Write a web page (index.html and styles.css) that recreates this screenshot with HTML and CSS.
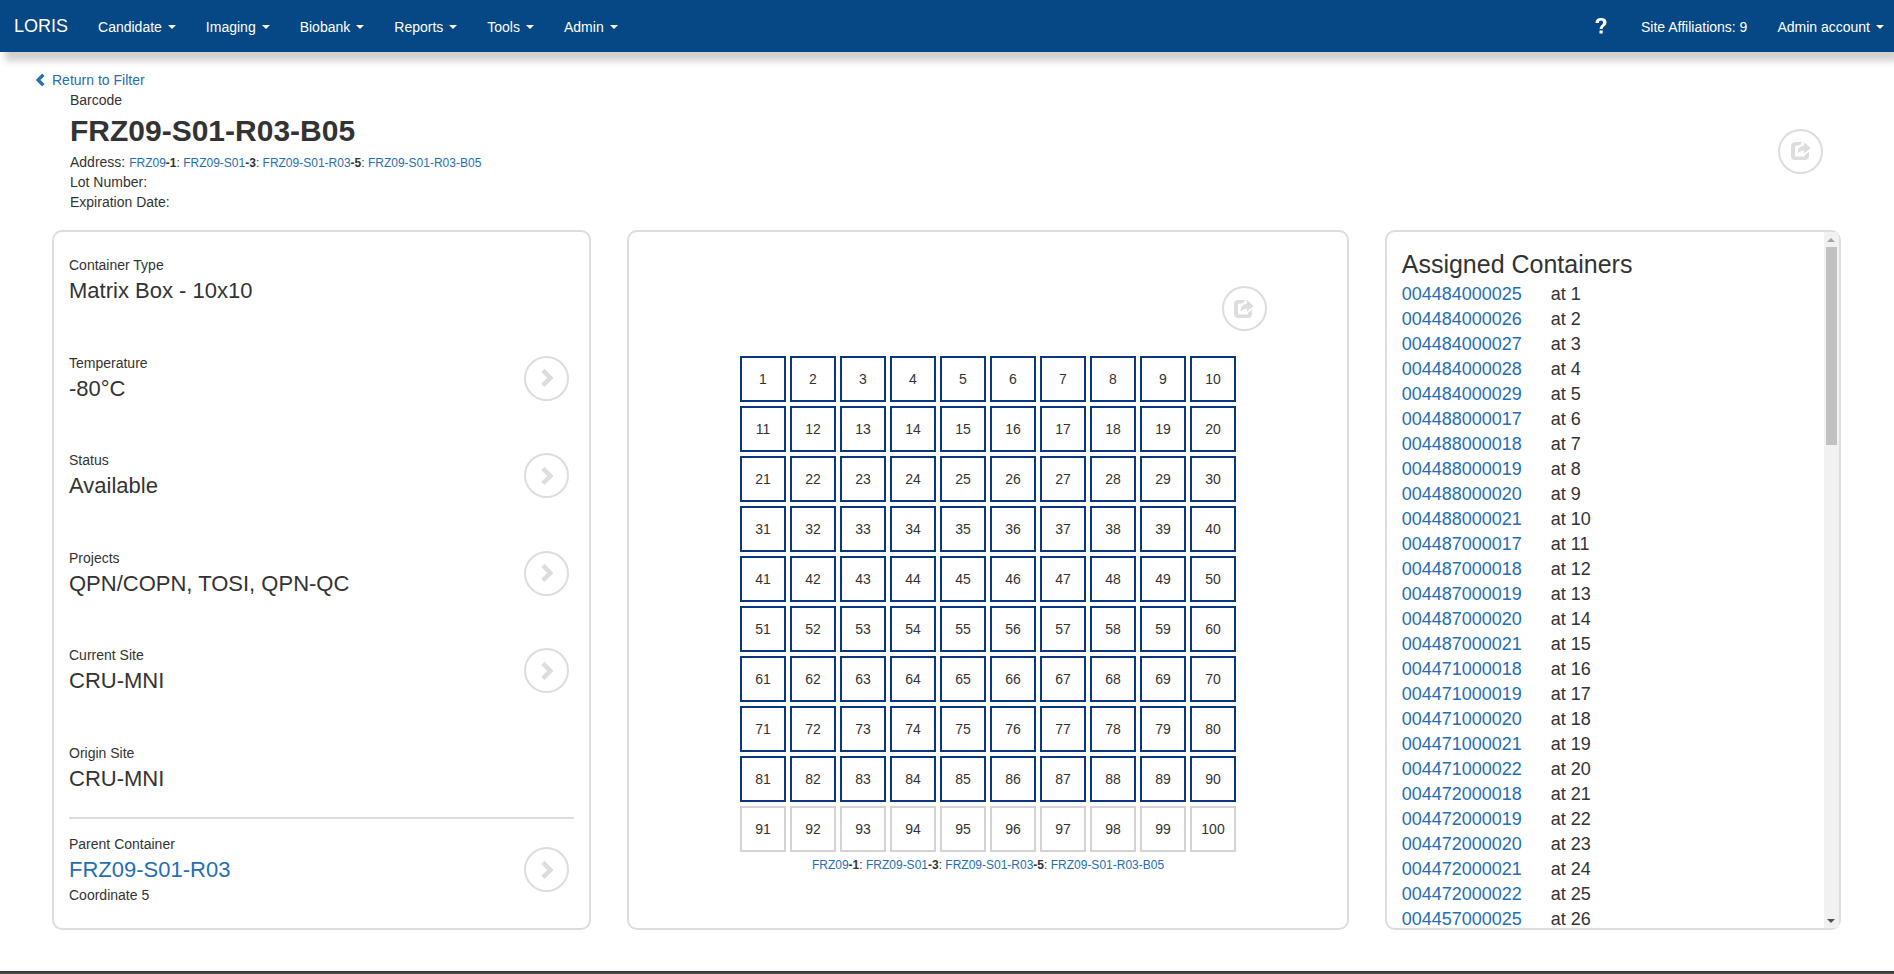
FILE: index.html
```html
<!DOCTYPE html>
<html lang="en">
<head>
<meta charset="utf-8">
<title>LORIS - FRZ09-S01-R03-B05</title>
<link rel="stylesheet" href="styles.css">
</head>
<body>
<svg class="sprite" aria-hidden="true">
  <symbol id="share" viewBox="0 0 20 20"><path d="M11.500 1L8.500 4.600H5.400Q4 4.600 4 6V14Q4 15.400 5.400 15.400H12.600Q14.400 15.400 14.400 14V13.500L18 10.500V14.500Q18 19 13.500 19H4.500Q0 19 0 14.500V5.500Q0 1 4.500 1Z"/><path d="M13 1L19.600 7L13 12.600V9.400Q9.500 9.200 6.500 12.400Q6.700 5.200 13 4.500Z"/></symbol>
  <symbol id="chev-right" viewBox="0 0 20 20"><path d="M4.300 4L7.500 .8L16.500 9.900L7.500 19L4.300 15.800L10.200 9.900Z"/></symbol>
  <symbol id="chev-left" viewBox="0 0 14 14"><path d="M8.200 .6L10.500 2.900L6.400 7L10.500 11.100L8.200 13.400L1.800 7Z"/></symbol>
  <symbol id="help" viewBox="0 0 14 18"><path d="M1.500 6Q1.600 1 7 1Q12.500 1 12.500 5.400Q12.500 7.400 10.500 8.900Q8.600 10.200 8.600 12H5.600Q5.500 9.600 7.700 7.900Q9.100 6.800 9.100 5.500Q9.100 3.600 7.100 3.600Q4.900 3.600 4.700 6ZM5.500 13.400H8.700V16.400H5.500Z"/></symbol>
</svg>

<nav class="navbar">
  <a class="brand" href="#">LORIS</a>
  <a class="nav-item" href="#">Candidate <span class="caret"></span></a>
  <a class="nav-item" href="#">Imaging <span class="caret"></span></a>
  <a class="nav-item" href="#">Biobank <span class="caret"></span></a>
  <a class="nav-item" href="#">Reports <span class="caret"></span></a>
  <a class="nav-item" href="#">Tools <span class="caret"></span></a>
  <a class="nav-item" href="#">Admin <span class="caret"></span></a>
  <div class="nav-right">
    <a class="nav-item help" href="#" aria-label="Help"><svg><use href="#help"/></svg></a>
    <a class="nav-item" href="#">Site Affiliations: 9</a>
    <a class="nav-item" href="#">Admin account <span class="caret"></span></a>
  </div>
</nav>

<main class="page">
  <a class="return" href="#"><svg><use href="#chev-left"/></svg>Return to Filter</a>
  <header class="header">
    <div>
      <div>Barcode</div>
      <h1>FRZ09-S01-R03-B05</h1>
      <div>Address: <span class="address"><a href="#">FRZ09</a><b>-1</b>: <a href="#">FRZ09-S01</a><b>-3</b>: <a href="#">FRZ09-S01-R03</a><b>-5</b>: <a href="#">FRZ09-S01-R03-B05</a></span></div>
      <div>Lot Number:</div>
      <div>Expiration Date:</div>
    </div>
    <button class="round" type="button" aria-label="Check out"><svg><use href="#share"/></svg></button>
  </header>

  <div class="columns">
    <section class="panel globals">
      <div class="items">
        <div class="item"><div><div>Container Type</div><div class="value">Matrix Box - 10x10</div></div></div>
        <div class="item"><div><div>Temperature</div><div class="value">-80°C</div></div><button class="round" type="button" aria-label="Edit temperature"><svg><use href="#chev-right"/></svg></button></div>
        <div class="item"><div><div>Status</div><div class="value">Available</div></div><button class="round" type="button" aria-label="Edit status"><svg><use href="#chev-right"/></svg></button></div>
        <div class="item"><div><div>Projects</div><div class="value">QPN/COPN, TOSI, QPN-QC</div></div><button class="round" type="button" aria-label="Edit projects"><svg><use href="#chev-right"/></svg></button></div>
        <div class="item"><div><div>Current Site</div><div class="value">CRU-MNI</div></div><button class="round" type="button" aria-label="Edit current site"><svg><use href="#chev-right"/></svg></button></div>
        <div class="item"><div><div>Origin Site</div><div class="value">CRU-MNI</div></div></div>
      </div>
      <div class="item parent"><div><div>Parent Container</div><div class="value"><a href="#">FRZ09-S01-R03</a></div><div>Coordinate 5</div></div><button class="round" type="button" aria-label="Edit parent container"><svg><use href="#chev-right"/></svg></button></div>
    </section>

    <section class="panel display">
      <div class="display-actions"><button class="round" type="button" aria-label="Load container"><svg><use href="#share"/></svg></button></div>
      <div class="matrix" id="matrix"></div>
      <div class="address"><a href="#">FRZ09</a><b>-1</b>: <a href="#">FRZ09-S01</a><b>-3</b>: <a href="#">FRZ09-S01-R03</a><b>-5</b>: <a href="#">FRZ09-S01-R03-B05</a></div>
    </section>

    <section class="panel list">
      <div class="list-body">
        <h2>Assigned Containers</h2>
        <div class="assigned" id="assigned"></div>
      </div>
      <div class="scrollbar" aria-hidden="true">
        <span class="arrow up"></span>
        <span class="thumb"></span>
        <span class="arrow down"></span>
      </div>
    </section>
  </div>
</main>
<footer class="footer"></footer>
<script src="app.js"></script>
</body>
</html>
```
FILE: styles.css
```css
* { box-sizing: border-box; }
body {
  margin: 0;
  min-height: 100vh;
  display: flex;
  flex-direction: column;
  font: 14px/20px "Liberation Sans", Arial, sans-serif;
  color: #333;
  background: #fff;
}
a { color: #246eb6; text-decoration: none; }
svg { fill: currentColor; display: block; }
.sprite { position: absolute; width: 0; height: 0; }

.navbar {
  display: flex;
  align-items: center;
  height: 52px;
  padding-top: 2px;
  background: #064785;
  box-shadow: 5px 9px 7px #d0d0d0;
}
.navbar a { color: #fff; }
.brand { font-size: 18px; padding: 0 15px 2px 14px; }
.nav-item { display: flex; align-items: center; gap: 6px; padding: 0 15px; }
.caret { border: 4px solid transparent; border-top-color: #fff; border-bottom: 0; }
.nav-right { display: flex; align-items: center; margin-left: auto; }
.nav-right .nav-item:last-child { padding-right: 10px; }
.nav-right .help { padding: 0 18px 2px 15px; }
.help svg { width: 14px; height: 18px; }

.page { padding: 18px 53px 41px 34px; }
.return { display: flex; align-items: center; gap: 4px; width: max-content; }
.return svg { width: 14px; height: 14px; }
.header {
  display: flex;
  align-items: center;
  justify-content: space-between;
  padding: 0 18px 0 36px;
  margin-bottom: 18px;
}
h1 { margin: 1px 0; font-size: 30px; line-height: 40px; }
.address { font-size: 12px; }
.header .address { line-height: 1; }

.round {
  width: 45px;
  height: 45px;
  flex: none;
  display: grid;
  place-items: center;
  padding: 0;
  border: 2px solid #ddd;
  border-radius: 50%;
  background: #fff;
  color: #ddd;
}
.round svg { width: 20px; height: 20px; }

.columns {
  display: grid;
  grid-template-columns: 539fr 721fr 456fr;
  gap: 36px;
  padding-left: 18px;
}
.panel {
  height: 700px;
  border: 2px solid #ddd;
  border-radius: 10px;
}
.globals { padding: 23px 15px; display: flex; flex-direction: column; }
.items { flex: 1; display: flex; flex-direction: column; justify-content: space-between; }
.item { display: flex; justify-content: space-between; align-items: center; padding-right: 5px; }
.value { font-size: 22px; line-height: 31px; }
.parent { margin-top: 23px; padding-top: 15px; border-top: 2px solid #ddd; }

.display { display: flex; flex-direction: column; align-items: center; padding-top: 54px; }
.display-actions { width: 100%; display: flex; justify-content: flex-end; padding-right: 80px; margin-bottom: 25px; }
.matrix { display: grid; grid-template-columns: repeat(10, 46px); gap: 4px; margin-bottom: 3px; }
.cell { height: 46px; border: 2px solid #d3d3d3; display: grid; place-items: center; }
.cell.filled { border-color: #093782; }

.list { display: flex; }
.list-body { flex: 1; padding: 14px 15px 0; overflow: hidden; }
h2 { margin: 0; font-size: 25px; line-height: 36px; font-weight: 400; }
.assigned { display: grid; grid-template-columns: 149px 1fr; font-size: 18px; line-height: 25px; }
.scrollbar { width: 15px; display: flex; flex-direction: column; align-items: center; background: #f1f1f1; }
.arrow { height: 15px; display: grid; place-items: center; }
.arrow::before { content: ""; border: 4px solid transparent; }
.up::before { border-bottom-color: #a3a3a3; border-top: 0; }
.down { margin-top: auto; }
.down::before { border-top-color: #505050; border-bottom: 0; }
.thumb { width: 11px; height: 198px; background: #c1c1c1; }

.footer { flex: 1; background: #48483f; border-top: 1px solid #33332c; }
```
FILE: app.js
```js
const matrix = document.getElementById('matrix');
for (let n = 1; n <= 100; n++) {
  const cell = document.createElement('div');
  cell.className = n <= 90 ? 'cell filled' : 'cell';
  cell.textContent = n;
  matrix.append(cell);
}

// Runs of consecutive barcodes: [first number, count]
const runs = [
  [4484000025, 5], [4488000017, 5], [4487000017, 5], [4471000018, 5],
  [4472000018, 5], [4457000025, 1],
];
const assigned = document.getElementById('assigned');
let position = 1;
for (const [first, count] of runs) {
  for (let i = 0; i < count; i++) {
    const link = document.createElement('a');
    link.href = '#';
    link.textContent = String(first + i).padStart(12, '0');
    const at = document.createElement('span');
    at.textContent = 'at ' + position++;
    assigned.append(link, at);
  }
}
```
